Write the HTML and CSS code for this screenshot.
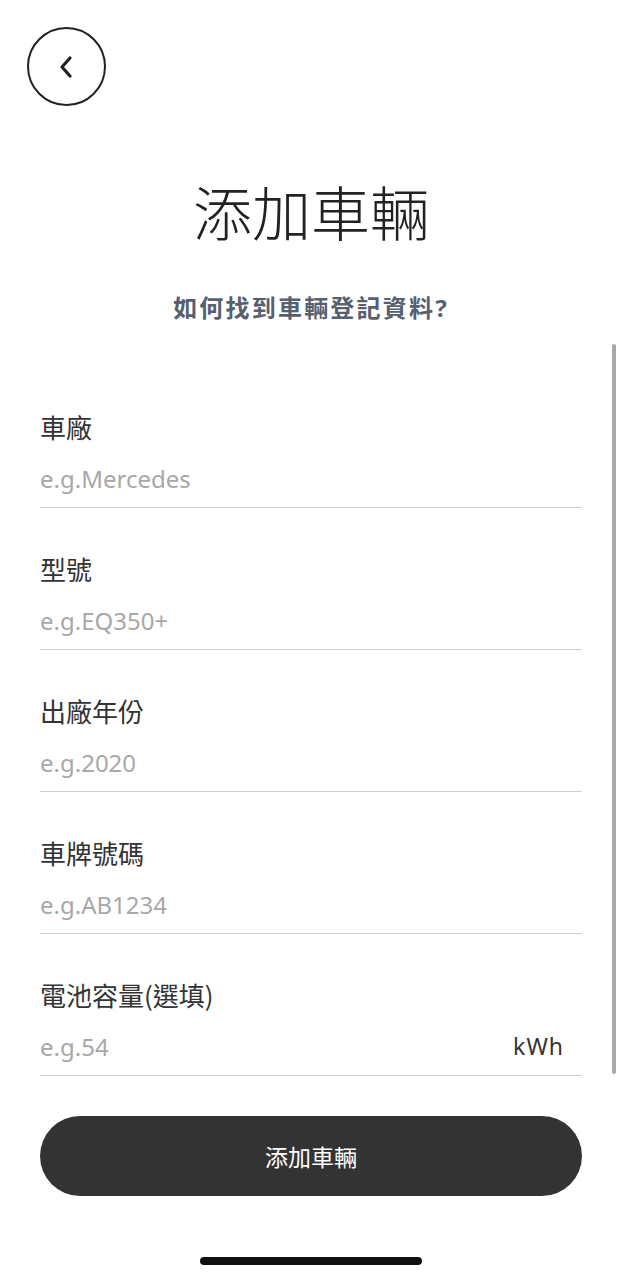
FILE: index.html
```html
<!DOCTYPE html>
<html lang="zh-Hant">
<head>
    <meta charset="UTF-8">
    <meta name="viewport" content="width=device-width, initial-scale=1.0">
    <title>添加車輛</title>
    <link rel="stylesheet" href="styles.css">
</head>
<body>
    <div class="screen">
        <button class="back-button" aria-label="返回">
            <svg width="16" height="24" viewBox="0 0 16 24">
                <path d="M12 3 L4 12 L12 21" fill="none" stroke="#222" stroke-width="3.2" stroke-linecap="round" stroke-linejoin="round"/>
            </svg>
        </button>

        <h1 class="title">添加車輛</h1>
        <a class="help-link" href="#">如何找到車輛登記資料?</a>

        <!-- Vehicle form -->
        <form class="vehicle-form" id="vehicleForm">
            <div class="field">
                <label for="make">車廠</label>
                <input type="text" id="make" placeholder="e.g.Mercedes">
            </div>
            <div class="field">
                <label for="model">型號</label>
                <input type="text" id="model" placeholder="e.g.EQ350+">
            </div>
            <div class="field">
                <label for="year">出廠年份</label>
                <input type="text" id="year" placeholder="e.g.2020">
            </div>
            <div class="field">
                <label for="plate">車牌號碼</label>
                <input type="text" id="plate" placeholder="e.g.AB1234">
            </div>
            <div class="field">
                <label for="battery">電池容量(選填)</label>
                <div class="input-row">
                    <input type="text" id="battery" placeholder="e.g.54">
                    <span class="unit">kWh</span>
                </div>
            </div>

            <button type="submit" class="submit-button">添加車輛</button>
        </form>

        <div class="home-indicator"></div>
        <div class="scrollbar"></div>
    </div>
</body>
</html>
```

FILE: styles.css
```css
body {
  margin: 0;
  background: #fff;
  font-family: "Noto Sans", "Noto Sans CJK TC", sans-serif;
  color: #333;
}

.screen {
  position: relative;
  width: 622px;
  height: 1280px;
  padding: 0 40px;
  box-sizing: border-box;
  display: flex;
  flex-direction: column;
  overflow: hidden;
}

.back-button {
  width: 79px;
  height: 79px;
  margin: 27px 0 0 -13px;
  border: 2px solid #222;
  border-radius: 50%;
  background: #fff;
  display: flex;
  align-items: center;
  justify-content: center;
  padding: 0;
  cursor: pointer;
}

.back-button svg {
  margin-left: -2px;
}

.title {
  margin: 70px 0 0;
  font-size: 59px;
  line-height: 70px;
  font-weight: 300;
  text-align: center;
  color: #222;
  font-family: "Noto Sans CJK TC", sans-serif;
}

.help-link {
  margin-top: 46px;
  font-size: 24px;
  line-height: 32px;
  font-weight: 700;
  text-align: center;
  color: #56606f;
  text-decoration: none;
  letter-spacing: 2.2px;
}

.vehicle-form {
  margin-top: 42px;
  display: flex;
  flex-direction: column;
}

.field {
  display: flex;
  flex-direction: column;
  padding: 44px 0 12px;
  border-bottom: 1px solid #d0d0d0;
}

.field label {
  font-size: 26px;
  line-height: 34px;
  color: #333;
  font-family: "Noto Sans CJK TC", sans-serif;
}

.field input {
  margin-top: 17px;
  height: 34px;
  padding: 0;
  border: none;
  outline: none;
  font-family: "Noto Sans", sans-serif;
  font-size: 24px;
  color: #333;
  background: transparent;
  width: 100%;
}

.field input::placeholder {
  color: #a8a8a8;
}

.input-row {
  display: flex;
  align-items: flex-end;
}

.input-row .unit {
  font-size: 23px;
  line-height: 34px;
  color: #333;
  margin-right: 18px;
  letter-spacing: 1px;
}

.submit-button {
  margin-top: 40px;
  height: 80px;
  border: none;
  border-radius: 40px;
  background: #333;
  color: #fff;
  font-size: 23px;
  font-family: "Noto Sans CJK TC", sans-serif;
  cursor: pointer;
}

.home-indicator {
  align-self: center;
  margin-top: 61px;
  width: 222px;
  height: 8px;
  border-radius: 4px;
  background: #111;
}

.scrollbar {
  position: absolute;
  top: 344px;
  right: 6px;
  width: 4px;
  height: 730px;
  border-radius: 2px;
  background: #a8a8a8;
}
```
